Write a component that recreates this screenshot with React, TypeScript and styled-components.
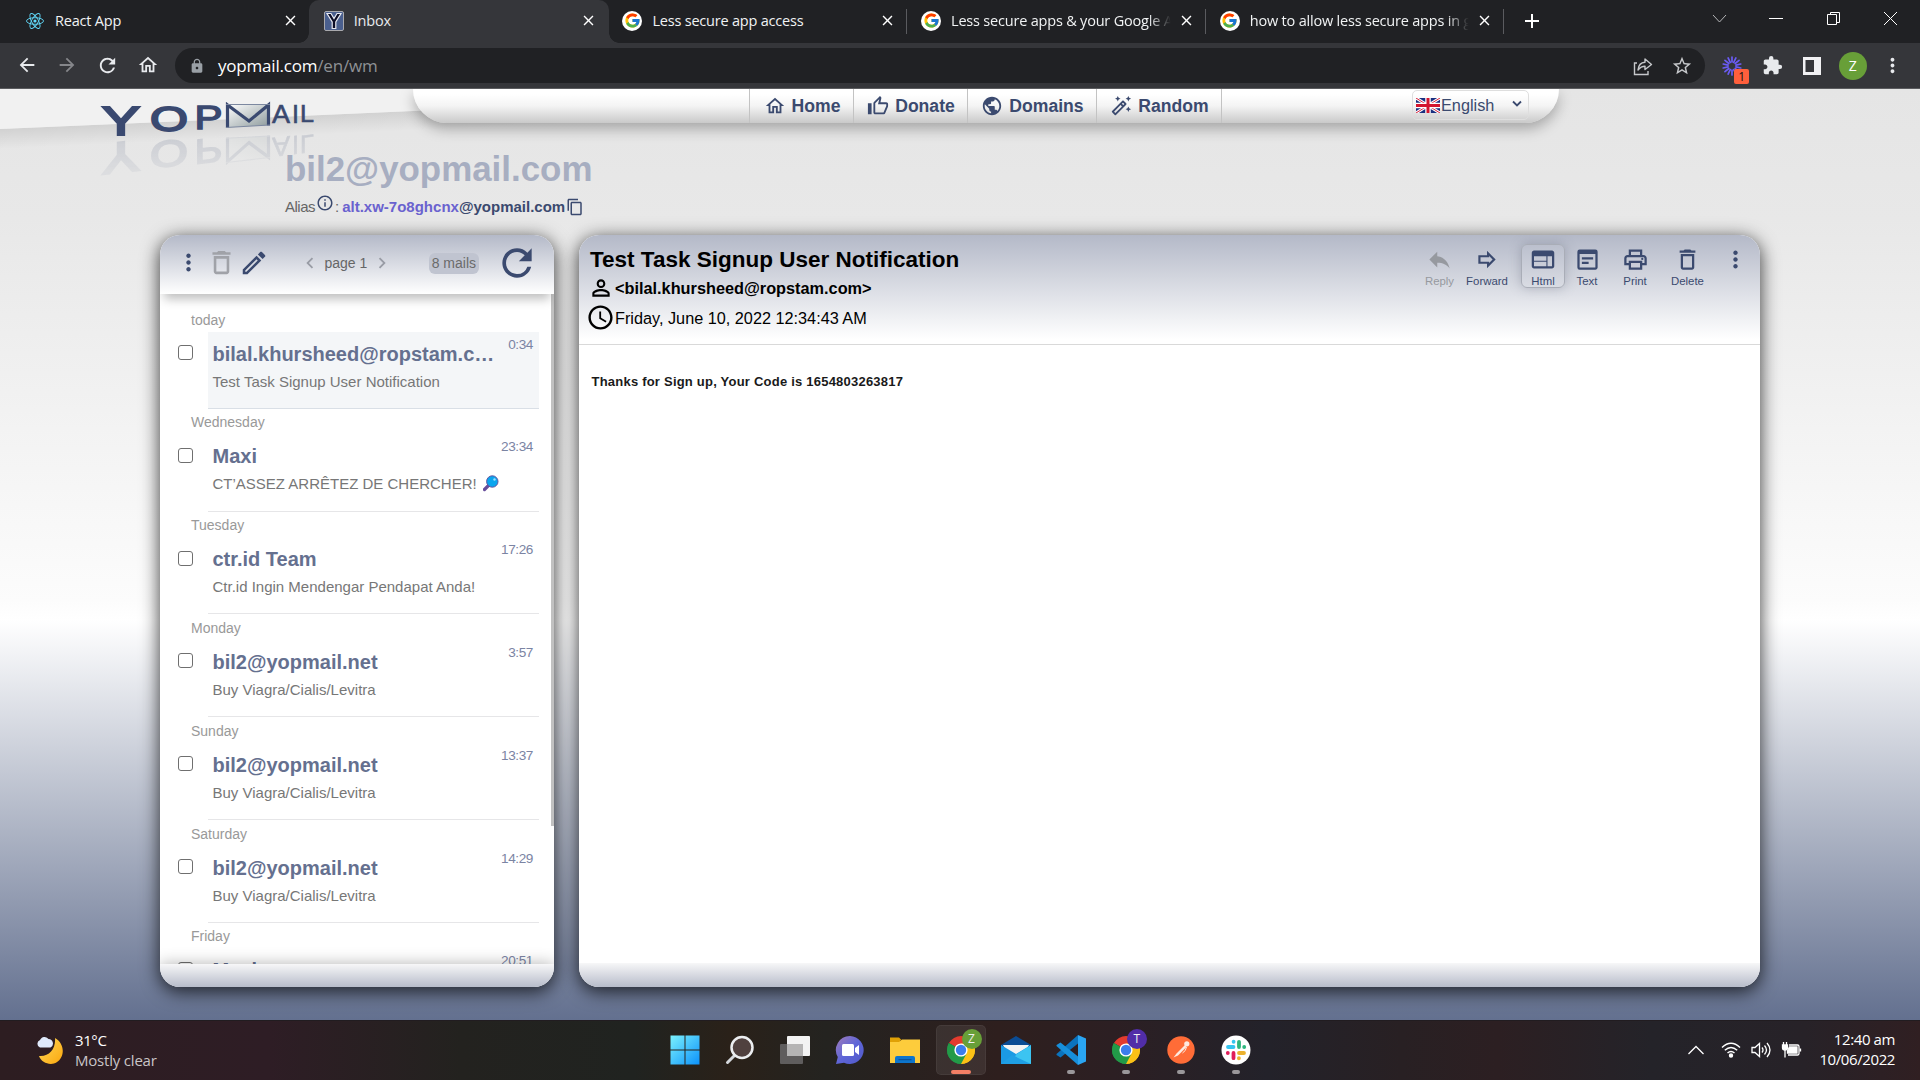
import React from "react";
import styled, { createGlobalStyle } from "styled-components";
import {
  MdArrowBack,
  MdArrowForward,
  MdRefresh,
  MdOutlineHome,
  MdLock,
  MdStarBorder,
  MdExtension,
  MdMoreVert,
  MdClose,
  MdAdd,
  MdOutlineThumbUp,
  MdPublic,
  MdOutlineAutoFixHigh,
  MdInfoOutline,
  MdContentCopy,
  MdDeleteOutline,
  MdOutlineEdit,
  MdChevronLeft,
  MdChevronRight,
  MdPersonOutline,
  MdAccessTime,
  MdReply,
  MdOutlineForward,
  MdWeb,
  MdOutlineWysiwyg,
  MdOutlinePrint,
} from "react-icons/md";
import { FcGoogle } from "react-icons/fc";

const UI = `"Open Sans", "Noto Sans", sans-serif`;
const ARIAL = `"Liberation Sans", Arial, sans-serif`;
const NAVY = "#3b4a6f";

const GlobalStyle = createGlobalStyle`
  * { box-sizing: border-box; }
  body { margin: 0; background: #202124; overflow: hidden; }
  svg { display: block; flex: none; }
`;

const Screen = styled.div`
  width: 1920px;
  height: 1080px;
  display: flex;
  flex-direction: column;
  overflow: hidden;
  font-family: ${ARIAL};
`;

/* ---------- browser chrome ---------- */

const TabStrip = styled.div`
  height: 43px;
  display: flex;
  align-items: stretch;
  background: #202124;
  padding-left: 10px;
`;

const Tab = styled.div<{ $active?: boolean }>`
  width: ${(p) => (p.$active ? 300.7 : 298.7)}px;
  margin-right: ${(p) => (p.$active ? -2 : 0)}px;
  flex: none;
  display: flex;
  align-items: center;
  padding: 0 ${(p) => (p.$active ? 12 : 10)}px 2px 15px;
  position: relative;
  color: ${(p) => (p.$active ? "#e8eaed" : "#f1f3f4")};
  background: ${(p) => (p.$active ? "#35363a" : "transparent")};
  border-radius: ${(p) => (p.$active ? "10px 10px 0 0" : "0")};
  &::before, &::after {
    content: ${(p) => (p.$active ? '""' : "none")};
    position: absolute;
    bottom: 0;
    width: 10px;
    height: 10px;
  }
  &::before {
    left: -10px;
    background: radial-gradient(circle at 0 0, transparent 9.5px, #35363a 10px);
  }
  &::after {
    right: -10px;
    background: radial-gradient(circle at 100% 0, transparent 9.5px, #35363a 10px);
  }
`;

const TabRule = styled.i`
  width: 1px;
  height: 25px;
  margin: 9px -1px 0 0;
  background: #5a5b5f;
  flex: none;
`;

const Favicon = styled.span<{ $disc?: boolean }>`
  width: 20px;
  height: 20px;
  flex: none;
  display: grid;
  place-items: center;
  border-radius: 50%;
  background: ${(p) => (p.$disc ? "#fff" : "none")};
`;

const TabTitle = styled.span<{ $fade?: boolean }>`
  flex: 1;
  min-width: 0;
  margin: 0 5px 0 10px;
  white-space: nowrap;
  font: 14.5px/20px ${UI};
  letter-spacing: -0.2px;
  mask-image: ${(p) => (p.$fade ? "linear-gradient(to right, #000 89%, transparent 99%)" : "none")};
`;

const NewTab = styled.div`
  display: flex;
  align-items: center;
  padding: 0 0 2px 17px;
  color: #fff;
`;

const WindowButtons = styled.div`
  margin-left: auto;
  padding: 0 22px 6px 0;
  display: flex;
  align-items: center;
  gap: 42.4px;
`;

const Toolbar = styled.div`
  height: 46px;
  display: flex;
  align-items: center;
  background: #35363a;
  border-bottom: 1px solid #5b5c5f;
  padding: 0 0 0 16px;
  color: #e8eaed;
`;

const NavButtons = styled.div`
  width: 159px;
  flex: none;
  display: flex;
  gap: 18px;
`;

const Dim = styled.span`
  color: #85868a;
`;

const Omnibox = styled.div`
  width: 1530px;
  height: 35px;
  flex: none;
  border-radius: 18px;
  background: #202124;
  display: flex;
  align-items: center;
  padding: 0 12px 0 14px;
  color: #9aa0a6;
`;

const Url = styled.span`
  flex: 1;
  margin-left: 13px;
  font: 17px/24px ${UI};
  letter-spacing: -0.2px;
  color: #fff;
  span { color: #8e9195; }
`;

const OmniActions = styled.div`
  display: flex;
  gap: 18px;
  align-items: center;
  color: #c6c8cb;
`;

const Extensions = styled.div`
  display: grid;
  grid-template-columns: repeat(5, 40.2px);
  align-items: center;
  justify-items: center;
  padding-left: 7px;
`;

const ExtWrap = styled.span`
  position: relative;
`;

const ExtBadge = styled.span`
  position: absolute;
  left: 12px;
  top: 15px;
  width: 15px;
  height: 15px;
  border-radius: 2px;
  background: #ff5f3c;
  color: #111;
  font: 12px/16px ${UI};
  text-align: center;
`;

const Avatar = styled.span`
  width: 28px;
  height: 28px;
  border-radius: 50%;
  background: #689f38;
  color: #fff;
  font: 14px/28px ${UI};
  text-align: center;
`;

/* ---------- page ---------- */

const Page = styled.main`
  height: 931px;
  position: relative;
  display: flex;
  flex-direction: column;
  background: linear-gradient(#e5e5e5 0%, #e8e8e8 14%, #fcfcfc 55%, #ffffff 57%, #63708f 100%);
`;

const Slope = styled.svg`
  position: absolute;
  left: 0;
  top: 0;
`;

const Header = styled.header`
  height: 34px;
  display: flex;
  position: relative;
`;

const LogoBox = styled.div`
  width: 413px;
  height: 34px;
  flex: none;
`;

const NavBar = styled.nav`
  width: 1146px;
  height: 34px;
  display: flex;
  border-radius: 0 0 34px 34px;
  background: linear-gradient(#ffffff 15%, #f4f4f4 50%, #c9c9c9 100%);
  box-shadow: 0 6px 14px rgba(0, 0, 0, 0.28);
  padding-left: 336px;
  clip-path: inset(0 -30px -30px -30px);
`;

const NavItem = styled.a<{ $w: number }>`
  width: ${(p) => p.$w}px;
  display: flex;
  align-items: center;
  justify-content: center;
  gap: 6px;
  padding-left: 1px;
  border-left: 1px solid #c3c3c3;
  color: ${NAVY};
  font: bold 17.6px/34px ${ARIAL};
  &:last-of-type { border-right: 1px solid #c3c3c3; }
`;

const LangSelect = styled.div`
  margin: 1px 0 0 190px;
  width: 117px;
  height: 30px;
  border: 1px solid #dedede;
  border-radius: 5px;
  display: flex;
  align-items: center;
  padding: 0 6px 0 3px;
  gap: 1px;
  color: ${NAVY};
  font: 16.3px/28px ${ARIAL};
  svg:last-child { margin: 0 0 3px auto; }
`;

const Address = styled.section`
  height: 112px;
  padding: 26px 0 0 285px;
  position: relative;
`;

const Mailbox = styled.h1`
  margin: 0;
  font: bold 34.9px/40px ${ARIAL};
  color: #a7aec1;
`;

const Alias = styled.div`
  display: flex;
  align-items: center;
  height: 20px;
  margin-top: 8px;
  font: 15px/20px ${ARIAL};
  color: #666;
  b { color: ${NAVY}; }
  b em { font-style: normal; color: #6a62cf; }
`;

const AliasLabel = styled.span`
  letter-spacing: -0.5px;
`;

const InfoIcon = styled(MdInfoOutline)`
  margin: 0 1px 8px 1px;
  color: ${NAVY};
`;

const Colon = styled.span`
  margin-right: 3px;
`;

const CopyIcon = styled(MdContentCopy)`
  margin-left: 1px;
  color: ${NAVY};
`;

const Panels = styled.div`
  display: flex;
  gap: 25px;
  padding: 0 160px;
  height: 752px;
  position: relative;
`;

const Panel = styled.section<{ $w: number }>`
  width: ${(p) => p.$w}px;
  display: flex;
  flex-direction: column;
  border-radius: 20px;
  background: #fff;
  overflow: hidden;
  box-shadow: 0 4px 18px 1px rgba(0, 0, 0, 0.72);
`;

const PanelFoot = styled.div`
  height: 24px;
  flex: none;
  position: relative;
  background: linear-gradient(#f7f7f8, #b7bcca);
`;

const ListFoot = styled(PanelFoot)`
  height: 23px;
  box-shadow: 0 0 16px rgba(0, 0, 0, 0.3);
`;

const ListHead = styled.div`
  height: 59px;
  flex: none;
  position: relative;
  display: flex;
  align-items: center;
  padding: 0 17px 4px 15px;
  background: linear-gradient(#b4b9c8, #ffffff);
  box-shadow: 0 9px 10px -4px rgba(0, 0, 0, 0.26);
  color: ${NAVY};
`;

const HeadTrash = styled(MdDeleteOutline)`
  margin-left: 4px;
  color: #a0a2a8;
`;

const HeadPencil = styled(MdOutlineEdit)`
  margin-left: 2px;
`;

const HeadReload = styled(MdRefresh)`
  margin-right: -2px;
`;

const Pager = styled.div`
  display: flex;
  align-items: center;
  margin-left: 30px;
  gap: 3.5px;
  font: 14px/20px ${ARIAL};
  color: #666;
  svg { color: #999ca5; }
`;

const Count = styled.span`
  margin: 2px 16px 0 auto;
  padding: 0 3px;
  height: 21px;
  border-radius: 6px;
  background: #c0c4d0;
  color: #6b6b6b;
  font: 14px/20px ${ARIAL};
`;

const ListBody = styled.div`
  flex: 1;
  min-height: 0;
  overflow: hidden;
  display: flex;
  padding-top: 12px;
`;

const Rows = styled.div`
  flex: 1;
  min-width: 0;
`;

const Thumb = styled.i`
  width: 3px;
  height: 532px;
  margin-top: -12px;
  background: #c1c1c1;
  flex: none;
`;

const Day = styled.div`
  height: 26px;
  padding: 3.6px 0 0 31px;
  font: 14px/20px ${ARIAL};
  color: #999;
`;

const Row = styled.div`
  height: 76.8px;
  display: flex;
  padding: 0 12px 0 18px;
`;

const Check = styled.span`
  width: 15px;
  height: 15px;
  margin: 13px 15px 0 0;
  border: 1px solid #6f6f6f;
  border-radius: 3px;
  background: #fff;
  flex: none;
`;

const Mail = styled.div<{ $on?: boolean }>`
  flex: 1;
  min-width: 0;
  display: grid;
  grid-template-columns: minmax(0, 1fr) auto;
  grid-template-rows: 36px 1fr;
  column-gap: 6px;
  padding: 0 6px 0 4.5px;
  background: ${(p) => (p.$on ? "#f4f6f8" : "#fff")};
  border-bottom: 1px solid ${(p) => (p.$on ? "#d9dfe6" : "#e6e6e8")};
`;

const From = styled.div`
  font: bold 20px/24px ${ARIAL};
  padding-top: 9.6px;
  color: #65708f;
  white-space: nowrap;
`;

const Time = styled.div`
  font: 13.6px/20px ${ARIAL};
  letter-spacing: -0.4px;
  padding-top: 2.7px;
  color: #7b84a3;
`;

const Subject = styled.div`
  grid-column: 1 / 3;
  display: flex;
  gap: 6px;
  font: 15px/20px ${ARIAL};
  padding-top: 3.6px;
  color: #777;
`;

const MailHead = styled.div`
  height: 110px;
  flex: none;
  display: flex;
  justify-content: space-between;
  background: linear-gradient(#b4b9c8, #ffffff 96%);
  border-bottom: 1px solid #d9d9d9;
`;

const MailInfo = styled.div`
  padding: 10px 0 0 9px;
  color: #000;
`;

const Title = styled.h2`
  margin: 0 0 -1px 2px;
  font: bold 22.5px/30px ${ARIAL};
`;

const InfoLine = styled.div<{ $bold?: boolean }>`
  height: ${(p) => (p.$bold ? 28 : 31)}px;
  margin-left: ${(p) => (p.$bold ? 0 : -2)}px;
  display: flex;
  align-items: center;
  gap: ${(p) => (p.$bold ? 1 : 0)}px;
  font: ${(p) => (p.$bold ? "bold 16.3px" : "16.25px")} / 24px ${ARIAL};
`;

const Actions = styled.div`
  display: flex;
  align-items: flex-start;
  padding: 9px 3px 0 0;
`;

const Action = styled.button<{ $w: number; $on?: boolean; $off?: boolean }>`
  width: ${(p) => p.$w}px;
  height: 44px;
  margin-left: ${(p) => (p.$on ? 4 : 0)}px;
  padding: 1px 0 0;
  display: flex;
  flex-direction: column;
  align-items: center;
  gap: 1px;
  border: 1px solid ${(p) => (p.$on ? "#a9adb7" : "transparent")};
  border-radius: 6px;
  background: none;
  box-shadow: ${(p) => (p.$on ? "0 0 12px rgba(90, 95, 115, .35)" : "none")};
  color: ${(p) => (p.$off ? "#96999f" : NAVY)};
  font: 11.4px/14px ${ARIAL};
  svg { height: 27px; }
`;

const Body = styled.div`
  flex: 1;
  padding: 27px 0 0 12.5px;
  font: bold 13px/20px ${ARIAL};
  letter-spacing: 0.22px;
  color: #1a1a1a;
`;

/* ---------- taskbar ---------- */

const Taskbar = styled.footer`
  height: 60px;
  display: grid;
  grid-template-columns: 1fr auto 1fr;
  align-items: center;
  padding-bottom: 2px;
  background: linear-gradient(to right, #2d1d21 0%, #2e1d25 14%, #23221f 24%, #202320 33%, #2a2119 38%, #242320 43%, #2e1f1e 52%, #2c1f23 58%, #23222a 66%, #282023 73%, #2c1f22 78%, #242329 86%, #272228 94%, #301f22 100%);
  border-top: 1px solid #211c20;
  color: #fff;
  font: 15px/20px ${UI};
`;

const Weather = styled.div`
  display: flex;
  align-items: center;
  gap: 11px;
  padding-left: 35px;
  letter-spacing: -0.4px;
  span { color: #c9c5c7; letter-spacing: -0.2px; }
`;

const Apps = styled.div`
  display: flex;
  gap: 5.1px;
  padding-left: 1px;
`;

const AppCell = styled.div<{ $on?: boolean }>`
  width: 50px;
  height: 50px;
  position: relative;
  display: grid;
  place-items: center;
  border-radius: 5px;
  background: ${(p) => (p.$on ? "rgba(255,255,255,.08)" : "none")};
  box-shadow: ${(p) => (p.$on ? "inset 0 0 0 1px rgba(255,255,255,.05)" : "none")};
`;

const Running = styled.i<{ $on?: boolean }>`
  position: absolute;
  left: 50%;
  bottom: 1px;
  width: ${(p) => (p.$on ? 20 : 8)}px;
  height: 4px;
  border-radius: 2px;
  transform: translateX(-50%);
  background: ${(p) => (p.$on ? "#f37f65" : "#9a979a")};
`;

const Profile = styled.span<{ $c: string }>`
  position: absolute;
  left: 26px;
  top: 4px;
  width: 20px;
  height: 20px;
  border-radius: 50%;
  background: ${(p) => p.$c};
  color: #f0f0f0;
  font: 12px/20px ${UI};
  text-align: center;
`;

const Tray = styled.div`
  display: flex;
  align-items: center;
  justify-content: flex-end;
  padding-right: 25px;
`;

const TrayIcons = styled.div`
  display: flex;
  align-items: center;
  gap: 10px;
  margin-right: 17px;
  svg:first-child { margin-right: 6px; }
`;

const Clock = styled.div`
  text-align: right;
  letter-spacing: -0.4px;
  width: 76px;
  white-space: nowrap;
  padding-bottom: 2px;
`;

/* ---------- drawings ---------- */

const ReactLogo = () => (
  <svg width="20" height="20" viewBox="-10 -10 20 20" fill="none" stroke="#61dafb" strokeWidth="0.9">
    {[0, 60, 120].map((a) => (
      <ellipse key={a} rx="8.5" ry="3.3" transform={`rotate(${a})`} />
    ))}
    <circle r="1.6" fill="#61dafb" stroke="none" />
  </svg>
);

const YopIcon = () => (
  <svg width="20" height="20" viewBox="0 0 20 20">
    <rect x=".5" y=".5" width="19" height="19" rx="1.5" fill="#4a5f8e" stroke="#a9a9ad" />
    <path d="M3 2.5h4l3 5 3-5h4L11.8 11v6.500H8.200V11z" fill="#0b0c25" stroke="#e7e9f0" strokeWidth="1.200" />
  </svg>
);

const Logo = () => (
  <svg width="413" height="110" viewBox="0 89 413 110" fontFamily={'"Liberation Sans", Arial, sans-serif'}>
    <defs>
      <linearGradient id="fade" gradientUnits="userSpaceOnUse" x1="0" y1="128" x2="0" y2="172">
        <stop offset="0" stopColor="#fff" stopOpacity=".18" />
        <stop offset="1" stopColor="#fff" stopOpacity=".06" />
      </linearGradient>
      <linearGradient id="env" x1="0" y1="0" x2="1" y2="1">
        <stop offset="0" stopColor="#fff" />
        <stop offset="1" stopColor="#8d9a9c" />
      </linearGradient>
      <mask id="fadeMask" maskUnits="userSpaceOnUse" x="0" y="120" width="413" height="79">
        <rect x="0" y="120" width="413" height="79" fill="url(#fade)" />
      </mask>
      <g id="word" fill="#3a4970" stroke="#3a4970">
        <text x="102" y="134.500" fontSize="41" textLength="38" lengthAdjust="spacingAndGlyphs" strokeWidth="2.200">Y</text>
        <text x="150" y="131" fontSize="35" textLength="38" lengthAdjust="spacingAndGlyphs" strokeWidth="1.800">O</text>
        <text x="194.500" y="129" fontSize="33" textLength="28" lengthAdjust="spacingAndGlyphs" strokeWidth="1.400">P</text>
        <path d="M227.500 104.500L268.500 104.500V125L227.500 127.500z" fill="url(#env)" stroke="none" />
        <path d="M227.500 128V105L249 121L268.500 105V125.500" fill="none" strokeWidth="3.200" />
        <path d="M226 104.500H270M226 127.500L270 125" stroke="#7c88a0" strokeWidth="1" fill="none" />
        <text x="272" y="123" fontSize="26" textLength="18" lengthAdjust="spacingAndGlyphs" strokeWidth=".6">A</text>
        <text x="292" y="122.500" fontSize="25" strokeWidth=".6">I</text>
        <text x="300" y="122" fontSize="24" textLength="14" lengthAdjust="spacingAndGlyphs" strokeWidth=".6">L</text>
      </g>
    </defs>
    <use href="#word" />
    <g mask="url(#fadeMask)">
      <use href="#word" transform="matrix(1 -0.11 0 -1.05 0 297)" />
    </g>
  </svg>
);

const Flag = () => (
  <svg width="24" height="15" viewBox="0 0 24 15">
    <rect width="24" height="15" fill="#1b2f80" />
    <path d="M0 0L24 15M24 0L0 15" stroke="#fff" strokeWidth="3" />
    <path d="M0 0L24 15M24 0L0 15" stroke="#d8203a" strokeWidth="1" />
    <path d="M12 0V15M0 7.500H24" stroke="#fff" strokeWidth="5.500" />
    <path d="M12 0V15M0 7.500H24" stroke="#d3152f" strokeWidth="3" />
  </svg>
);

const Magnifier = () => (
  <svg width="16" height="18" viewBox="0 0 16 18">
    <path d="M6 11L1.500 15.500" stroke="#674d9b" strokeWidth="3.200" strokeLinecap="round" />
    <circle cx="9.300" cy="7.500" r="5.700" fill="#0aa5ee" stroke="#5f54a0" strokeWidth="1" />
    <circle cx="11.500" cy="5.500" r="1.200" fill="#9be0ff" />
  </svg>
);

const Chrome = () => (
  <svg width="28" height="28" viewBox="-14 -14 28 28">
    <path d="M0 0L-12.100 -7A14 14 0 0 1 12.100 -7z" fill="#e33b2e" />
    <path d="M0 0L12.100 -7A14 14 0 0 1 0 14z" fill="#fbc116" />
    <path d="M0 0L0 14A14 14 0 0 1 -12.100 -7z" fill="#229a48" />
    <path d="M0 -6.500H12.400A14 14 0 0 1 0 14L5.700 3z" fill="#fbc116" />
    <path d="M-12.100 -7L-5.700 3.300L0 6.500L5.700 3.200L0 14A14 14 0 0 1 -12.100 -7z" fill="#229a48" />
    <circle r="6.600" fill="#fff" />
    <circle r="5.200" fill="#3b7ded" />
  </svg>
);

const Start = () => (
  <svg width="30" height="30" viewBox="0 0 30 30">
    <defs>
      <linearGradient id="win" x1="0" y1="0" x2="30" y2="30" gradientUnits="userSpaceOnUse">
        <stop offset="0" stopColor="#7df3fd" />
        <stop offset="1" stopColor="#0a90fa" />
      </linearGradient>
    </defs>
    <path d="M.5.500h14v14H.5zM15.500.500h14v14h-14zM.5 15.500h14v14H.5zM15.500 15.500h14v14h-14z" fill="url(#win)" />
  </svg>
);

const Search = () => (
  <svg width="30" height="30" viewBox="0 0 30 30">
    <path d="M10 20L2.500 27.500" stroke="#d5d8dc" strokeWidth="3" strokeLinecap="round" />
    <circle cx="17" cy="12.500" r="10.500" fill="#50413f" stroke="#eceef0" strokeWidth="2.500" />
  </svg>
);

const TaskView = () => (
  <svg width="32" height="30" viewBox="0 0 32 30">
    <rect x="8" y="1" width="23" height="20" rx="1" fill="#f3f3f3" />
    <rect x="1" y="9" width="23" height="20" rx="1" fill="#5f5d5d" />
    <path d="M8 9h16v12H8z" fill="#b5b4b4" />
  </svg>
);

const Chat = () => (
  <svg width="30" height="30" viewBox="0 0 30 30">
    <defs>
      <linearGradient id="chat" x1="0" y1="0" x2="1" y2="1">
        <stop offset="0" stopColor="#a17bb8" />
        <stop offset=".5" stopColor="#5f66d8" />
        <stop offset="1" stopColor="#5059c9" />
      </linearGradient>
    </defs>
    <path d="M15 1A14 14 0 1 1 9 27.800L1 29L2.800 22A14 14 0 0 1 15 1z" fill="url(#chat)" />
    <rect x="7" y="9" width="12" height="12" rx="1.500" fill="#fff" />
    <path d="M20 13L24 10V20L20 17z" fill="#fff" />
  </svg>
);

const Folder = () => (
  <svg width="32" height="28" viewBox="0 0 32 28">
    <path d="M1 1.500h9l3 3h-2v4H1z" fill="#e0a106" />
    <path d="M1 6h9l3-2.500h18V27H1z" fill="#fdcc3c" />
    <path d="M6 27V22a2 2 0 0 1 2-2h16a2 2 0 0 1 2 2v5z" fill="#0d75cc" />
    <path d="M9.500 23.700h13" stroke="#0a4c91" strokeWidth="1" />
  </svg>
);

const MailApp = () => (
  <svg width="32" height="30" viewBox="0 0 32 30">
    <path d="M1 10L16 1L31 10V15H1z" fill="#0b4c94" />
    <path d="M3 10H29L24 18L16 20L7 18z" fill="#f3f3f3" />
    <path d="M1 10L16 19L31 10V29H1z" fill="#1b9ae4" />
    <path d="M31 10L16 19.500L12 29H31z" fill="#3cc4f1" />
    <path d="M12 20L31 29H1z" fill="#1f9fe5" />
  </svg>
);

const VsCode = () => (
  <svg width="32" height="32" viewBox="0 0 32 32">
    <path d="M23 1L31 4.500V27.500L23 31z" fill="#2aa5f2" />
    <path d="M23 1V9.500L5.500 23.500L1.500 21V20z" fill="#0b73bd" />
    <path d="M23 31V22.500L5.500 8.500L1.500 11V12z" fill="#178fdb" />
  </svg>
);

const Postman = () => (
  <svg width="28" height="28" viewBox="0 0 28 28">
    <circle cx="14" cy="14" r="13.700" fill="#ff6c37" />
    <circle cx="19.800" cy="7.800" r="2.600" fill="#fde9df" />
    <path d="M18 9L9.500 17.500L6.500 21.500L11 19.500L19.500 11z" fill="#fde9df" />
    <path d="M19.500 11Q19 15 15.500 17" stroke="#fde9df" fill="none" />
  </svg>
);

const Slack = () => (
  <svg width="30" height="30" viewBox="0 0 30 30" strokeWidth="3.800" strokeLinecap="round">
    <circle cx="15" cy="15" r="14.500" fill="#fff" />
    <path d="M7 12H12.500M12.600 6.700V6.800" stroke="#36c5f0" />
    <path d="M18 6.800V12M23.200 12.100V12" stroke="#2eb67d" />
    <path d="M23 18H18M17.900 23.200V23.300" stroke="#ecb22e" />
    <path d="M12.500 23.200V18M6.800 18V18.100" stroke="#e01e5a" />
  </svg>
);

const Moon = () => (
  <svg width="29" height="30" viewBox="0 0 29 30">
    <defs>
      <linearGradient id="moon" x1="0" y1="0" x2="1" y2="1">
        <stop offset="0" stopColor="#ffd95a" />
        <stop offset="1" stopColor="#fba70d" />
      </linearGradient>
    </defs>
    <path d="M20 3C31 9 30 25 19 28.500C13 30 6 27 4 21C14 22 21 14 20 3z" fill="url(#moon)" />
    <path d="M5 12.500a4 4 0 0 1 0-7.500A5 5 0 0 1 13.500 4a4.500 4.500 0 0 1 2 8.500z" fill="#dfe9fb" />
  </svg>
);

const Burst = () => (
  <svg width="20" height="24" viewBox="-10 -12 20 24" stroke="#6b5cf5" strokeWidth="1.700" strokeLinecap="round">
    {Array.from({ length: 14 }, (_, i) => (
      <path key={i} d="M0 -4V-9" transform={`rotate(${(i * 360) / 14})`} />
    ))}
  </svg>
);

/* ---------- data ---------- */

const tabs = [
  { title: "React App", icon: <ReactLogo /> },
  { title: "Inbox", icon: <YopIcon />, active: true },
  { title: "Less secure app access", google: true, line: true },
  { title: "Less secure apps & your Google A", google: true, line: true, fade: true },
  { title: "how to allow less secure apps in g", google: true, line: true, fade: true },
];

const mails = [
  { day: "today", from: "bilal.khursheed@ropstam.c…", subject: "Test Task Signup User Notification", time: "0:34", on: true },
  { day: "Wednesday", from: "Maxi", subject: "CT’ASSEZ ARRÊTEZ DE CHERCHER!", time: "23:34", mag: true },
  { day: "Tuesday", from: "ctr.id Team", subject: "Ctr.id Ingin Mendengar Pendapat Anda!", time: "17:26" },
  { day: "Monday", from: "bil2@yopmail.net", subject: "Buy Viagra/Cialis/Levitra", time: "3:57" },
  { day: "Sunday", from: "bil2@yopmail.net", subject: "Buy Viagra/Cialis/Levitra", time: "13:37" },
  { day: "Saturday", from: "bil2@yopmail.net", subject: "Buy Viagra/Cialis/Levitra", time: "14:29" },
  { day: "Friday", from: "Maxi", subject: "", time: "20:51" },
];

const apps = [
  { icon: <Start /> },
  { icon: <Search /> },
  { icon: <TaskView /> },
  { icon: <Chat /> },
  { icon: <Folder /> },
  { icon: <Chrome />, on: true, run: true, profile: "Z", color: "#689f38" },
  { icon: <MailApp /> },
  { icon: <VsCode />, run: true },
  { icon: <Chrome />, run: true, profile: "T", color: "#512da8" },
  { icon: <Postman />, run: true },
  { icon: <Slack />, run: true },
];

export default function App() {
  return (
    <Screen>
      <GlobalStyle />
      <TabStrip>
        {tabs.map((t, i) => (
          <React.Fragment key={i}>
            <Tab $active={t.active}>
              <Favicon $disc={t.google}>{t.google ? <FcGoogle size={17} /> : t.icon}</Favicon>
              <TabTitle $fade={t.fade}>{t.title}</TabTitle>
              <MdClose size={17} color="#fff" />
            </Tab>
            {t.line && <TabRule />}
          </React.Fragment>
        ))}
        <NewTab>
          <MdAdd size={24} />
        </NewTab>
        <WindowButtons>
          <svg width="15" height="15" viewBox="0 0 15 15" fill="none" stroke="#b5b6b8"><path d="M1 4L7.500 11L14 4" /></svg>
          <svg width="14" height="15" viewBox="0 0 14 15" fill="none" stroke="#fff"><path d="M0 7.500H14" /></svg>
          <svg width="15" height="15" viewBox="0 0 15 15" fill="none" stroke="#fff"><path d="M1.500 3.500h9v10h-9zM4.500 3V1.500h9v10H11" /></svg>
          <svg width="15" height="15" viewBox="0 0 15 15" fill="none" stroke="#fff"><path d="M1 1L14 14M14 1L1 14" /></svg>
        </WindowButtons>
      </TabStrip>
      <Toolbar>
        <NavButtons>
          <MdArrowBack size={22} />
          <Dim><MdArrowForward size={22} /></Dim>
          <MdRefresh size={23} />
          <MdOutlineHome size={22} />
        </NavButtons>
        <Omnibox>
          <MdLock size={16} />
          <Url>yopmail.com<span>/en/wm</span></Url>
          <OmniActions>
            <svg width="20" height="20" viewBox="0 0 20 20" fill="none" stroke="currentColor" strokeWidth="1.400">
              <path d="M4 7H1.500V18.500H15V15" />
              <path d="M5 14C5.500 9 8 6.500 12 6.300V3L18.500 8.500L12 13.500V10.300C9 10.300 7 11.500 5 14z" strokeLinejoin="round" />
            </svg>
            <MdStarBorder size={22} />
          </OmniActions>
        </Omnibox>
        <Extensions>
          <ExtWrap><Burst /><ExtBadge>1</ExtBadge></ExtWrap>
          <MdExtension size={21} />
          <svg width="18" height="18" viewBox="0 0 18 18"><path d="M0 0h18v18H0zM2.500 3v12h8.500V3z" fill="#f1f1f3" fillRule="evenodd" /></svg>
          <Avatar>Z</Avatar>
          <MdMoreVert size={23} />
        </Extensions>
      </Toolbar>

      <Page>
        <Slope width="760" height="100" viewBox="0 0 760 100">
          <defs>
            <linearGradient id="under" gradientUnits="userSpaceOnUse" x1="0" y1="40" x2="0.9" y2="60">
              <stop offset="0" stopColor="#000" stopOpacity=".09" />
              <stop offset="1" stopColor="#000" stopOpacity="0" />
            </linearGradient>
          </defs>
          <path d="M0 40L760 7V60L0 90z" fill="url(#under)" />
          <path d="M0 0H760V7L0 40z" fill="#f1f1f1" />
        </Slope>
        <Header>
          <LogoBox><Logo /></LogoBox>
          <NavBar>
            <NavItem $w={104}><MdOutlineHome size={22} />Home</NavItem>
            <NavItem $w={114}><MdOutlineThumbUp size={22} />Donate</NavItem>
            <NavItem $w={129}><MdPublic size={22} />Domains</NavItem>
            <NavItem $w={126}><MdOutlineAutoFixHigh size={22} />Random</NavItem>
            <LangSelect>
              <Flag />English
              <svg width="10" height="8" viewBox="0 0 10 8" fill="none" stroke={NAVY} strokeWidth="1.800"><path d="M1 1.500L5 5.500L9 1.500" /></svg>
            </LangSelect>
          </NavBar>
        </Header>
        <Address>
          <Mailbox>bil2@yopmail.com</Mailbox>
          <Alias>
            <AliasLabel>Alias</AliasLabel><InfoIcon size={18} /><Colon>:</Colon>
            <b><em>alt.xw-7o8ghcnx</em>@yopmail.com</b>
            <CopyIcon size={18} />
          </Alias>
        </Address>
        <Panels>
          <Panel $w={394}>
            <ListHead>
              <MdMoreVert size={27} />
              <HeadTrash size={31} />
              <HeadPencil size={30} />
              <Pager><MdChevronLeft size={22} />page 1<MdChevronRight size={22} /></Pager>
              <Count>8 mails</Count>
              <HeadReload size={44} />
            </ListHead>
            <ListBody>
              <Rows>
                {mails.map((m, i) => (
                  <React.Fragment key={i}>
                    <Day>{m.day}</Day>
                    <Row>
                      <Check />
                      <Mail $on={m.on}>
                        <From>{m.from}</From>
                        <Time>{m.time}</Time>
                        <Subject>{m.subject}{m.mag && <Magnifier />}</Subject>
                      </Mail>
                    </Row>
                  </React.Fragment>
                ))}
              </Rows>
              <Thumb />
            </ListBody>
            <ListFoot />
          </Panel>
          <Panel $w={1181}>
            <MailHead>
              <MailInfo>
                <Title>Test Task Signup User Notification</Title>
                <InfoLine $bold><MdPersonOutline size={26} />&lt;bilal.khursheed@ropstam.com&gt;</InfoLine>
                <InfoLine><MdAccessTime size={29} />Friday, June 10, 2022 12:34:43 AM</InfoLine>
              </MailInfo>
              <Actions>
                <Action $w={35} $off><MdReply size={27} />Reply</Action>
                <Action $w={60}><MdOutlineForward size={26} />Forward</Action>
                <Action $w={44} $on><MdWeb size={30} />Html</Action>
                <Action $w={44}><MdOutlineWysiwyg size={27} />Text</Action>
                <Action $w={52}><MdOutlinePrint size={29} />Print</Action>
                <Action $w={53}><MdDeleteOutline size={31} />Delete</Action>
                <Action $w={43}><MdMoreVert size={27} /></Action>
              </Actions>
            </MailHead>
            <Body>Thanks for Sign up, Your Code is 1654803263817</Body>
            <PanelFoot />
          </Panel>
        </Panels>
      </Page>

      <Taskbar>
        <Weather>
          <Moon />
          <div>31°C<br /><span>Mostly clear</span></div>
        </Weather>
        <Apps>
          {apps.map((a, i) => (
            <AppCell key={i} $on={a.on}>
              {a.icon}
              {a.profile && <Profile $c={a.color!}>{a.profile}</Profile>}
              {a.run && <Running $on={a.on} />}
            </AppCell>
          ))}
        </Apps>
        <Tray>
          <TrayIcons>
            <svg width="18" height="12" viewBox="0 0 18 12" fill="none" stroke="#fff" strokeWidth="1.300"><path d="M1.500 10L9 2.500L16.500 10" /></svg>
            <svg width="20" height="18" viewBox="0 0 20 18" fill="none" stroke="#fff" strokeWidth="1.400">
              <path d="M1 6.500Q10 -2 19 6.500M3.800 9.300Q10 3.500 16.200 9.300M6.500 12Q10 8.800 13.500 12" />
              <circle cx="10" cy="14.500" r="1.500" fill="#fff" />
            </svg>
            <svg width="20" height="18" viewBox="0 0 20 18" fill="none" stroke="#fff" strokeWidth="1.300">
              <path d="M1 6.500h3L8.500 2.500v13L4 11.500H1zM11 6.500q2 2.500 0 5M13.500 4.500q4 4.500 0 9M16 2q6 7 0 14" />
            </svg>
            <svg width="21" height="18" viewBox="0 0 21 18" fill="none" stroke="#fff" strokeWidth="1.300">
              <path d="M8 4h8.500a1.500 1.500 0 0 1 1.500 1.500v7a1.500 1.500 0 0 1-1.500 1.500H7M19.500 7.500v3M4 9v7.500" />
              <path d="M8.500 6h7.500v6H6.500V10z" fill="#fff" />
              <path d="M1.500 4h5v3q0 2-2.500 2t-2.500-2zM2.500 1v3M5.500 1v3" fill="#fff" />
            </svg>
          </TrayIcons>
          <Clock>12:40 am<br />10/06/2022</Clock>
        </Tray>
      </Taskbar>
    </Screen>
  );
}
